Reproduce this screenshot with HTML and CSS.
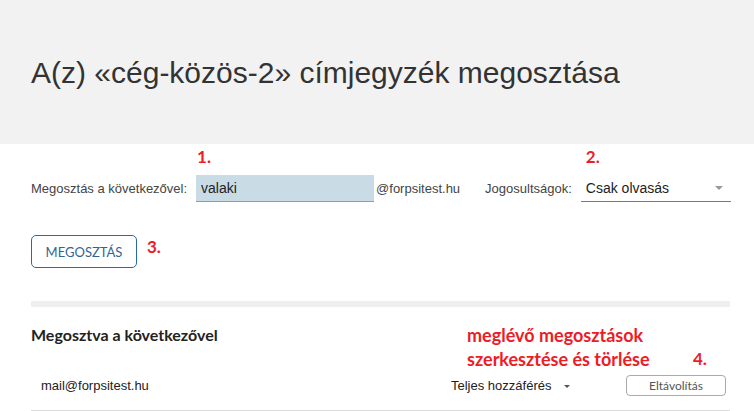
FILE: index.html
```html
<!DOCTYPE html>
<html lang="hu">
<head>
    <meta charset="UTF-8">
    <meta name="viewport" content="width=device-width, initial-scale=1.0">
    <title>Címjegyzék megosztása</title>
<link rel="stylesheet" href="styles.css">
</head>
<body>
    <div id="header">
        <h1>A(z) «cég-közös-2» címjegyzék megosztása</h1>
    </div>
    <div id="content">
        <div class="shareRow">
            <label class="lbl">Megosztás a következővel:</label>
            <div class="field">
                <span class="note noteOne">1.</span>
                <input type="text" class="userInput" value="valaki">
            </div>
            <span class="domain">@forpsitest.hu</span>
            <label class="lbl lblRights">Jogosultságok:</label>
            <div class="field">
                <span class="note noteTwo">2.</span>
                <div class="select">
                    <span>Csak olvasás</span>
                    <i class="caret"></i>
                </div>
            </div>
        </div>
        <div class="btnRow">
            <button class="btnShare">MEGOSZTÁS</button>
            <span class="note">3.</span>
        </div>
        <div class="divider"></div>
        <div class="listHead">
            <h2>Megosztva a következővel</h2>
            <p class="note noteFour">meglévő megosztások<br>szerkesztése és törlése</p>
            <span class="note noteNum">4.</span>
        </div>
        <div class="shareItem">
            <span class="mail">mail@forpsitest.hu</span>
            <span class="rights">Teljes hozzáférés <i class="caret caretSmall"></i></span>
            <button class="btnRemove">Eltávolítás</button>
        </div>
    </div>
</body>
</html>
```

FILE: styles.css
```css
body{
    margin: 0;
    font-family: "Liberation Sans", Arial, sans-serif;
    color: #222;
    background-color: #fff;
}
#header{
    background-color: #f2f2f2;
    height: 144px;
    padding: 0 31px;
    display: flex;
    align-items: center;
}
#header h1{
    margin: 0;
    font-weight: normal;
    font-size: 30px;
    color: #333;
    padding-top: 2px;
    white-space: nowrap;
}
#content{
    padding: 0 24px 0 31px;
}
.shareRow{
    display: flex;
    align-items: flex-end;
    padding-top: 31px;
    height: 58px;
    box-sizing: border-box;
    white-space: nowrap;
}
.lbl{
    font-size: 13px;
    color: #444;
    line-height: 26px;
    margin-right: 9px;
    flex-shrink: 0;
}
.lblRights{
    margin-left: 25px;
}
.field{
    position: relative;
    flex-shrink: 0;
}
.note{
    font-family: Lato, sans-serif;
    font-weight: bold;
    font-size: 17px;
    color: #ee1c25;
}
.noteOne{
    position: absolute;
    left: 1px;
    top: -29px;
}
.noteTwo{
    position: absolute;
    left: 5px;
    top: -29px;
}
.userInput{
    width: 178px;
    height: 27px;
    box-sizing: border-box;
    border: none;
    border-bottom: 1px solid #9a9a9a;
    background-color: #c9dce6;
    font-family: "Liberation Sans", Arial, sans-serif;
    font-size: 14px;
    color: #222;
    padding: 0 5px;
    margin: 0;
    display: block;
}
.domain{
    font-size: 13px;
    color: #444;
    line-height: 26px;
    margin-left: 2px;
    flex-shrink: 0;
}
.select{
    width: 150px;
    height: 27px;
    box-sizing: border-box;
    border-bottom: 1px solid #4a7fd6;
    display: flex;
    align-items: center;
    justify-content: space-between;
    padding: 0 8px 0 5px;
    font-size: 14px;
    color: #222;
}
.caret{
    width: 0;
    height: 0;
    border-left: 4px solid transparent;
    border-right: 4px solid transparent;
    border-top: 4px solid #999;
}
.caretSmall{
    display: inline-block;
    border-left-width: 3px;
    border-right-width: 3px;
    border-top: 3px solid #555;
    margin-left: 9px;
    vertical-align: middle;
}
.btnRow{
    display: flex;
    align-items: flex-start;
    margin-top: 33px;
}
.btnShare{
    width: 106px;
    height: 33px;
    border: 1px solid #2a6aa3;
    border-radius: 5px;
    background-color: #fff;
    color: #2f6596;
    font-family: Lato, sans-serif;
    font-size: 13px;
    padding: 0;
    cursor: pointer;
}
.btnRow .note{
    margin-left: 10px;
    margin-top: 1px;
}
.divider{
    height: 6px;
    background-color: #efefef;
    margin-top: 33px;
}
.listHead{
    display: flex;
    align-items: flex-start;
    margin-top: 16px;
    height: 36px;
}
.listHead h2{
    font-family: Lato, sans-serif;
    font-weight: bold;
    font-size: 16px;
    margin: 2px 0 0;
    width: 436px;
    color: #222;
}
.noteFour{
    margin: 0;
    font-size: 18px;
    line-height: 24px;
    width: 226px;
}
.noteNum{
    margin-top: 24px;
    line-height: 24px;
}
.shareItem{
    display: flex;
    align-items: center;
    height: 52px;
    border-bottom: 1px solid #dcdcdc;
    padding-left: 10px;
    padding-top: 2px;
    box-sizing: border-box;
}
.mail{
    font-size: 13px;
    width: 410px;
}
.rights{
    font-size: 13px;
    width: 175px;
}
.btnRemove{
    width: 100px;
    height: 21px;
    border: 1px solid #aaa;
    border-radius: 4px;
    background-color: #fff;
    color: #555;
    font-family: Lato, sans-serif;
    font-size: 12px;
    padding: 0;
}
```
